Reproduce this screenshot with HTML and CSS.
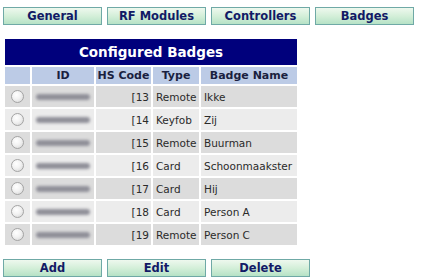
FILE: index.html
```html
<!DOCTYPE html>
<html lang="en">
<head>
  <meta charset="UTF-8">
  <title>Configured Badges</title>
  <link rel="stylesheet" href="styles.css">
</head>
<body>

  <div class="tabs">
    <button>General</button>
    <button>RF Modules</button>
    <button>Controllers</button>
    <button>Badges</button>
  </div>

  <table class="badges">
    <colgroup>
      <col class="c-sel">
      <col class="c-id">
      <col class="c-hs">
      <col class="c-type">
      <col class="c-name">
    </colgroup>
    <tr>
      <th class="title" colspan="5">Configured Badges</th>
    </tr>
    <tr class="head">
      <th></th>
      <th>ID</th>
      <th>HS Code</th>
      <th>Type</th>
      <th>Badge Name</th>
    </tr>
    <tr>
      <td><span class="radio"></span></td>
      <td><span class="blur"></span></td>
      <td class="hs">[13</td>
      <td>Remote</td>
      <td>Ikke</td>
    </tr>
    <tr>
      <td><span class="radio"></span></td>
      <td><span class="blur"></span></td>
      <td class="hs">[14</td>
      <td>Keyfob</td>
      <td>Zij</td>
    </tr>
    <tr>
      <td><span class="radio"></span></td>
      <td><span class="blur"></span></td>
      <td class="hs">[15</td>
      <td>Remote</td>
      <td>Buurman</td>
    </tr>
    <tr>
      <td><span class="radio"></span></td>
      <td><span class="blur"></span></td>
      <td class="hs">[16</td>
      <td>Card</td>
      <td>Schoonmaakster</td>
    </tr>
    <tr>
      <td><span class="radio"></span></td>
      <td><span class="blur"></span></td>
      <td class="hs">[17</td>
      <td>Card</td>
      <td>Hij</td>
    </tr>
    <tr>
      <td><span class="radio"></span></td>
      <td><span class="blur"></span></td>
      <td class="hs">[18</td>
      <td>Card</td>
      <td>Person A</td>
    </tr>
    <tr>
      <td><span class="radio"></span></td>
      <td><span class="blur"></span></td>
      <td class="hs">[19</td>
      <td>Remote</td>
      <td>Person C</td>
    </tr>
  </table>

  <div class="actions">
    <button>Add</button>
    <button>Edit</button>
    <button>Delete</button>
  </div>

</body>
</html>
```

FILE: styles.css
```css
body {
  margin: 0;
  padding: 7px 3px;
  background-color: #ffffff;
  font-family: 'DejaVu Sans', Verdana, sans-serif;
  font-size: 10.5px;
  color: #2a2a2a;
}

.tabs,
.actions {
  display: flex;
  gap: 5px;
}

button {
  width: 99px;
  height: 18px;
  padding: 0;
  border: 1px solid #6fa9a6;
  background: linear-gradient(to bottom, #eef8ee 0%, #d4efd9 50%, #b6e2c6 100%);
  font-family: 'DejaVu Sans', Verdana, sans-serif;
  font-size: 11.5px;
  font-weight: bold;
  color: #121a66;
  cursor: pointer;
}

.badges {
  width: 296px;
  margin: 12px 0;
  border-spacing: 2px;
  table-layout: fixed;
}

.c-sel { width: 25px; }
.c-id { width: 62px; }
.c-hs { width: 55px; }
.c-type { width: 46px; }
.c-name { width: 96px; }

.badges th.title {
  height: 26px;
  padding: 0;
  background-color: #00007c;
  color: #ffffff;
  font-size: 13.5px;
  font-weight: bold;
}

.head th {
  height: 17px;
  padding: 0;
  background-color: #bccbe6;
  color: #1a1f40;
  font-size: 11px;
  font-weight: bold;
  white-space: nowrap;
}

.badges td {
  height: 21px;
  padding: 0 3px;
  white-space: nowrap;
  overflow: hidden;
  background-color: #ececec;
}

.badges tr:nth-child(odd) td {
  background-color: #dcdcdc;
}

.badges td.hs {
  text-align: right;
  padding-right: 2px;
}

.radio {
  display: block;
  width: 11px;
  height: 11px;
  margin-left: 3px;
  border: 1px solid #a4a4a4;
  border-radius: 50%;
  background: radial-gradient(circle at 40% 35%, #ffffff 0%, #f2f2f2 45%, #d2d2d2 100%);
}

.blur {
  display: block;
  width: 54px;
  height: 6px;
  margin-left: 1px;
  border-radius: 3px;
  background-color: #8f8f98;
  filter: blur(1.5px);
}
```
